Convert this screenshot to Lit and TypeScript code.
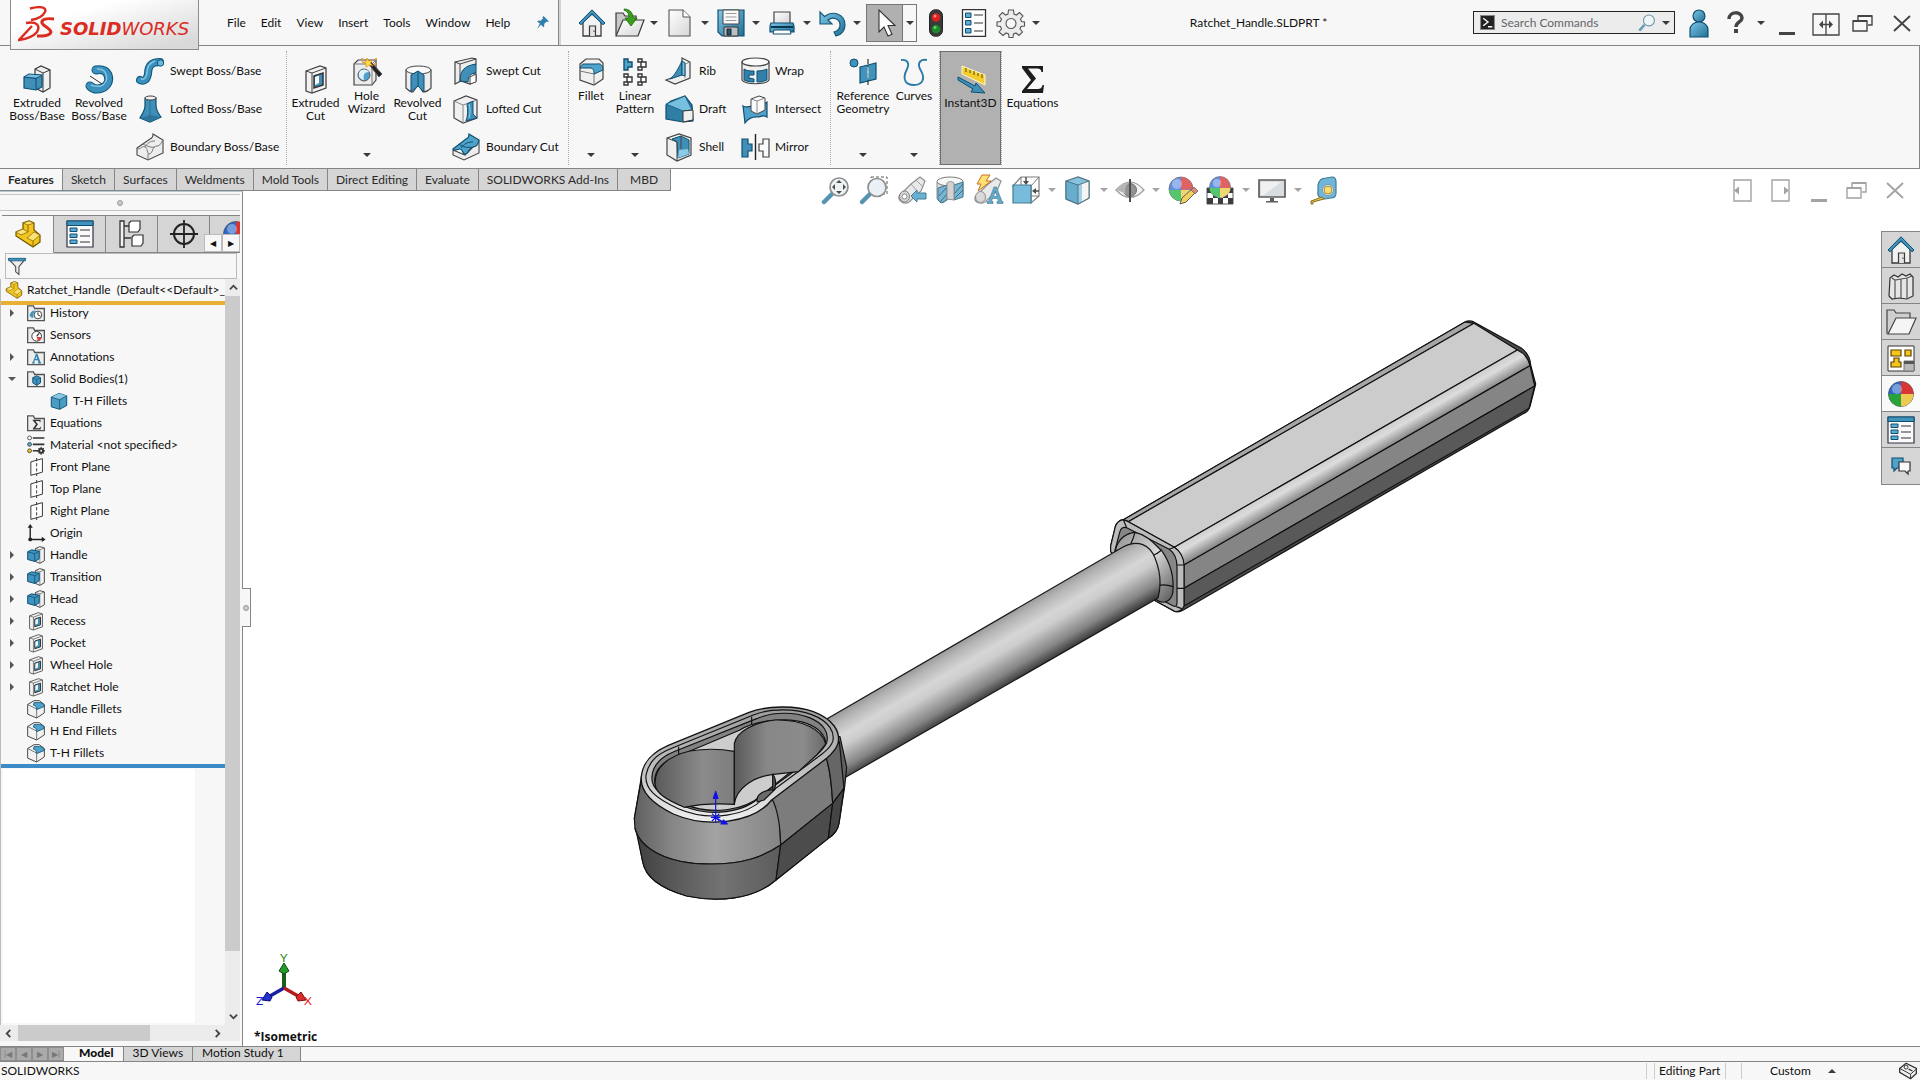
import { LitElement, html, svg, css, nothing, type TemplateResult } from "lit";
import { customElement, state } from "lit/decorators.js";
import { classMap } from "lit/directives/class-map.js";

type Art = ReturnType<typeof svg>;

/* ---------- icon artwork, each on a 28 x 28 grid ---------- */
const art: Record<string, Art> = {
  home: svg`<path d="M5 13v14h18V13L14 5z" fill="#f2f2f2" stroke="#3a3a3a" stroke-width="1.3"/>
    <path d="M11.5 27V17h6v10" fill="#e4e4e4" stroke="#3a3a3a" stroke-width="1.2"/><path d="M16 21.5v1.5" stroke="#3a3a3a"/>
    <path d="M1 14 14 .8 27 14l-2 1.8L14 4.8 3 15.800z" fill="#3f93bd" stroke="#0e4f70"/>`,
  open: svg`<path d="M1 26V4h7l2 3h11v6" fill="#c9c9c9" stroke="#3a3a3a" stroke-width="1.2"/>
    <path d="M2 27 9 11h21l-6 16z" fill="url(#paper)" stroke="#3a3a3a" stroke-width="1.2" transform="translate(-1 0)"/>
    <path d="M9 0c6 0 9 4 9 9h4l-6 8-6-8h4c0-4-1-6-5-8z" fill="#39a01a" stroke="#1c6b0a" stroke-width=".8"/>`,
  file: svg`<path d="M3 1h14l7 7v19H3z" fill="url(#paper)" stroke="#555" stroke-width="1.1"/><path d="M17 1v7h7" fill="#fff" stroke="#555"/>`,
  save: svg`<path d="M1 1h26v26H5l-4-4z" fill="url(#blue)" stroke="#15506e" stroke-width="1.2"/><path d="M6 1h16v14H6z" fill="#fafafa" stroke="#444"/>
    <path d="M8.500 4.500h11M8.500 8h11M8.500 11.500h11" stroke="#999"/><path d="M7 18h14v9H7z" fill="#b9bec2" stroke="#333"/><path d="M10 20h4v6h-4z" fill="#1d5877" stroke="#222"/>`,
  print: svg`<path d="M6 14V3h16v11" fill="url(#paper)" stroke="#444" stroke-width="1.2"/><path d="M3 14h22l1 3v6H2v-6z" fill="url(#blue)" stroke="#0e4f70" stroke-width="1.200"/>
    <path d="M3 18h22" stroke="#083850" stroke-width="2"/><path d="M6 21h16l1 4H5z" fill="#fff" stroke="#0e4f70"/>`,
  undo: svg`<path d="M1 3v12h12l-4-4c5-4 12-1 12 5 0 4-2 6-6 7l2 4c6-1 9-6 9-11C26 5 14 1 5.500 7.500z" fill="url(#blue)" stroke="#155877" stroke-width="1.200"/>`,
  pointer: svg`<path d="M8 1v22l5-5 4 9 4-1.800-4-8.700h7z" fill="#fff" stroke="#333" stroke-width="1.100"/>`,
  traffic: svg`<rect x="7.500" y=".7" width="13" height="26.600" rx="6" fill="#3a3a3a" stroke="#222"/><circle cx="14" cy="8.500" r="4.300" fill="#dc1f1f"/><circle cx="13" cy="7" r="1.500" fill="#ff8a80"/>
    <circle cx="14" cy="20" r="4.300" fill="#1b8a2a"/><circle cx="13" cy="18.500" r="1.500" fill="#62cf6c"/>`,
  options: svg`<path d="M2.500 .7h23v26.600h-23z" fill="#fff" stroke="#333" stroke-width="1.300"/><g fill="#5cacd4" stroke="#0e4f70"><path d="M5.500 4h5.500v4.500H5.500zM5.500 11.500h5.500V16H5.500zM5.500 19.500h5.500V24H5.500z"/></g><path d="M14 6h9M14 14h9M14 22h9" stroke="#333"/>`,
  gear: svg`<path d="M11.500 1h5l.5 4 2.500 1 3-2.500L26 7l-2.500 3 1 2.500 3 .5v4l-3.500.5-1 2.500 2.500 3-3.500 3.500-3-2.500-2.500 1-.5 3.500h-4l-.5-3.500-2.500-1-3 2.500L2 23l2.500-3-1-2.500L0 17v-4l3.500-.5 1-2.500L2 7l3.500-3.500 3 2.500L11 5z" fill="#ececec" stroke="#555" stroke-width="1.100"/><circle cx="14" cy="14.500" r="5" fill="#f7f7f7" stroke="#555" stroke-width="1.100"/>`,
  extrude: svg`<path d="M12 4 18 1l9 4v18l-7 4-8-4z" fill="#f0f0f0" stroke="#3a3a3a" stroke-width="1.200"/><path d="m12 4 8 4v19M20 8l7-3" fill="none" stroke="#3a3a3a"/>
    <path d="M1 12l5-3 13 1v12l-6 3-12-2z" fill="#3f8fb8" stroke="#0e4f70" stroke-width="1.200"/><path d="m1 12 12 1.500V25M13 13.500l6-3.500" fill="none" stroke="#0e4f70"/><path d="m2 11.500 4.500-2L18 10.500l-5 2z" fill="#7cc0e0"/>`,
  revolve: svg`<path d="M11 5C25 2 28 19 17 23c-5 2-9 1-12-2" fill="none" stroke="#0f5679" stroke-width="9" stroke-linecap="round"/><path d="M11 5C25 2 28 19 17 23c-5 2-9 1-12-2" fill="none" stroke="#3b91bb" stroke-width="7" stroke-linecap="round"/>
    <path d="M12 4c11-1 13 13 4 17-4 1-7 0-10-1" fill="none" stroke="#83c4e2" stroke-width="1.500"/><path d="m5 11 12 8" stroke="#333"/>`,
  sweep: svg`<path d="M4 23c5 2 7-1 8-6 0-7 2-12 12-12" fill="none" stroke="#0f5679" stroke-width="8" stroke-linecap="round"/><path d="M4 23c5 2 7-1 8-6 0-7 2-12 12-12" fill="none" stroke="#3b91bb" stroke-width="6" stroke-linecap="round"/>
    <path d="M5 22c4 1 5-2 6-6 0-5 2-10 8-12" fill="none" stroke="#83c4e2" stroke-width="1.500"/><circle cx="24.500" cy="6" r="3.200" fill="#6db7da" stroke="#0f5679"/>`,
  loft: svg`<path d="M9 3v8c0 4-2 7-5 12l10 4 11-5c-4-5-5-8-5-12V3z" fill="#3f8fb8" stroke="#0e4f70" stroke-width="1.200"/><path d="m4 23 10 4 11-5-11-2z" fill="#2c769d"/><path d="M14 5v22" stroke="#2a6f94"/><ellipse cx="14.500" cy="3" rx="5.500" ry="2" fill="#f2f2f2" stroke="#3a3a3a"/>`,
  boundary: svg`<path d="M1 15 14 6c3-1 3-3 3-5l10 6v13L12 27 1 22z" fill="#ededed" stroke="#444" stroke-width="1.100"/><path d="M1 15c4 3 4-3 8-1 3 1 2 7 4 7 4 0 3-8 8-8 3 0 4-3 6-6M12 27v-6M7 11c4 2 8 4 12 3M9 14c3-4 5-6 10-6" fill="none" stroke="#777"/>`,
  boundaryCut: svg`<path d="M1 17 1 22 12 27 27 20V8l-14 14z" fill="#ededed" stroke="#444" stroke-width="1.100"/><path d="M1 16 14 6c3-1 3-3 3-5l10 6c-1 5-3 7-6 7-4 0-4 7-8 7-3 0-2-5-5-5s-5 3-7 0z" fill="#4fa3cb" stroke="#0e4f70" stroke-width="1.200"/><path d="M7 11c4 3 8 4 12 3M9 15c3-4 6-6 12-6" fill="none" stroke="#0e4f70"/>`,
  extrudeCut: svg`<path d="m4 6 14-5 6 2v20l-14 5-6-2z" fill="#f2f2f2" stroke="#444" stroke-width="1.300"/><path d="m4 6 6 2v20M10 8l14-5" fill="none" stroke="#444"/><path d="m12 11 9-3v12l-9 3z" fill="#3f8fb8" stroke="#333" stroke-width="1.500"/><path d="m13 12 4-1.500V18l-4 2z" fill="#f7f7f7"/>`,
  wizard: svg`<path d="m1 6 4-4h18v20l-4 5H1z" fill="#ececec" stroke="#444" stroke-width="1.200"/><path d="M1 6h18v21M19 6l4-4" fill="none" stroke="#777"/><circle cx="11" cy="17" r="6" fill="#4fa3cb" stroke="#555"/><path d="M7 13a6 6 0 0 1 9 1c-5 0-6 3-5 8-6-1-6-6-4-9z" fill="#e2f0f8"/>
    <path d="m14 4 3-1 12 13-3 3z" fill="#222" stroke="#555"/><path d="m14 0 1.500 3L19 2l-1.500 3L20 8l-4-1-3 2v-3.500L9 4h4z" fill="#ffe14d" stroke="#e08600" stroke-width=".7"/><path d="M8 0h2v2H8zM22 0h2v2h-2zM21 5h2v2h-2z" fill="#e8a03a"/>`,
  revolveCut: svg`<path d="M2 5v18c2 2 5 4 7 4l5-7 5 7c3 0 6-2 8-4V5z" fill="#ededed" stroke="#444" stroke-width="1.200"/><ellipse cx="14.500" cy="5" rx="12.500" ry="4" fill="#fafafa" stroke="#444"/><path d="m14 6-7 4v17l7-6 6 6V10z" fill="#3f8fb8" stroke="#0e4f70"/><path d="M14 6v15" stroke="#0e4f70"/>`,
  sweepCut: svg`<path d="M3 5 20 1l4 1v5c-5 1-6 4-7 9l7 1v7l-6 3-9-3-6 3z" fill="#ececec" stroke="#444" stroke-width="1.200"/><path d="M8 24c0-9 3-15 16-17v9c-5 0-8 3-8 9z" fill="#3f8fb8" stroke="#0e4f70"/><path d="M8 24V7l16-5M3 5l5 2" fill="none" stroke="#444"/><path d="M18 20l6-3v8l-6 2z" fill="#fff" stroke="#444"/>`,
  loftCut: svg`<path d="m2 6 12-5 11 4v18l-14 5-9-5z" fill="#f0f0f0" stroke="#444" stroke-width="1.200"/><path d="m2 6 9 4v18M11 10l14-5" fill="none" stroke="#888"/><path d="M15 9c3-2 5-2 6-3v13l4 4-11 3c2-5 2-11 1-17z" fill="#3f8fb8" stroke="#0e4f70"/><path d="M17 9c2 6 1 10 0 14" fill="none" stroke="#9bd0e8"/>`,
  fillet: svg`<path d="M3 6 9 1h13l4 4v16l-9 6-14-5z" fill="#f0f0f0" stroke="#444" stroke-width="1.200"/><path d="M3 13l14 3v11M17 16l9-5" fill="none" stroke="#777"/><path d="M7 6h13c4-1 6 2 6 6l-9 4c0-4-1-6-4-6H3c1-3 2-4 4-4z" fill="#4fa3cb" stroke="#0e4f70"/>`,
  pattern: svg`<g stroke-width="1.400"><path d="M3 1h4v3h4v5H7v3H3z" fill="#4fa3cb" stroke="#0e4f70"/><g fill="#fff" stroke="#333"><path d="M17 1h4v3h4v5h-4v3h-4V9h3V4h-3zM3 16h4v3h4v5H7v3H3v-3h3v-5H3zM17 16h4v3h4v5h-4v3h-4v-3h3v-5h-3z"/></g></g>`,
  rib: svg`<path d="m17 1 8 4v16L10 27l-9-4 16-6z" fill="#efefef" stroke="#444" stroke-width="1.200"/><path d="M25 5l-5 2v14" fill="none" stroke="#888"/><path d="M17 4v14L5 22C10 18 13 12 17 4z" fill="#3f8fb8" stroke="#0e4f70"/><path d="m17 4 3 2v13l-3-1z" fill="#7cc0e0" stroke="#0e4f70"/>`,
  draft: svg`<path d="M1 10 6 6l14-5 7 9 1 16-10 1-17-3z" fill="#2f7ea6" stroke="#0e4f70" stroke-width="1.200"/><path d="M1 9 20 1l7 14-9 1z" fill="#76bfe0" stroke="#0e4f70" stroke-width=".7"/><path d="m18 16 10-1v10l-10 2z" fill="#f0f0f0" stroke="#333"/>`,
  shell: svg`<path d="m2 5 12-4 12 4v17l-14 6L2 22z" fill="#efefef" stroke="#444" stroke-width="1.200"/><path d="m7 6 9-3 8 4v14l-11 4-1-16z" fill="#3f8fb8" stroke="#0e4f70"/><path d="m13 25 1-8 9-1 1 5z" fill="#8bcbe8"/><path d="m2 5 10 4v19M16 3v13" fill="none" stroke="#444"/>`,
  wrap: svg`<path d="M1 5v18c3 5 24 5 27 0V5z" fill="#f0f0f0" stroke="#444" stroke-width="1.200"/><ellipse cx="14.500" cy="5" rx="13.500" ry="4" fill="#fbfbfb" stroke="#444" stroke-width="1.200"/><path d="M3 12c3 2 6 2 10 2v4H8v3l5 1v3c-5 0-8-1-10-2zM16 14c4 0 8-1 10-2v11c-2 1-6 2-10 2z" fill="#2f81ab" stroke="#0e4f70"/>`,
  intersect: svg`<path d="M2 11c5 3 7-2 12 2s8-4 12-6v15c-4-3-6 0-9 0s-8-1-13 6z" fill="#4fa3cb" stroke="#0e4f70" stroke-width="1.200"/><path d="m10 4 8-3 6 2v12l-8 4-6-3z" fill="#fafafa" stroke="#444"/><path d="m10 4 6 2v13M16 6l8-3" fill="none" stroke="#888"/>`,
  mirror: svg`<path d="M1 6h6v5h4v7H7v6H1z" fill="#3f8fb8" stroke="#0e4f70" stroke-width="1.200"/><path d="M28 6h-6v5h-4v7h4v6h6z" fill="#fafafa" stroke="#444" stroke-width="1.200"/><path d="M14.500 1v26" stroke="#222" stroke-width="1.400"/>`,
  geometry: svg`<circle cx="5" cy="5" r="4" fill="#3f93bd" stroke="#0e4f70"/><path d="m11 9 16-4v16l-16 4z" fill="#3f93bd" stroke="#0e4f70" stroke-width="1.200"/><path d="M19 1v27" stroke="#333" stroke-dasharray="5 2" stroke-width="1.200"/><path d="M19 9v11" stroke="#fff"/>`,
  curves: svg`<path d="M1 2c6-1 9 3 6 9-6 12 0 16 7 16s13-5 6-16C17 4 21 1 27 2" fill="none" stroke="#2a7ba6" stroke-width="1.900"/>`,
  instant: svg`<path d="m5 1 23 9v10L5 9z" fill="#f8d43a" stroke="#fff8c8"/><path d="m6 4 21 8v6L6 9z" fill="#f3cc2e"/><path d="M9 3v4M13 5v3M17 6v4M21 8v3M25 9v4" stroke="#5b4700"/><path d="m1 12 17 9 1-3 9 10-14-1 2-3L1 15z" fill="#3f8fb8" stroke="#0e4f70"/>`,
  sigma: svg`<path d="M3 1h21v6h-1.500c-.5-3-2-3.500-4-3.500H9l8 10-9 10.500h11c2 0 4-1 4.500-4H25l-1 8H3v-2l9-11L3 3z" fill="#1d1d1d"/>`,
  zoomFit: svg`<path d="m2 26 8-8" stroke="#4b8fae" stroke-width="4.500" stroke-linecap="round"/><circle cx="17" cy="11" r="9" fill="#eef3f6" stroke="#8a8a8a" stroke-width="1.700"/><path d="m17 4 3 3h-6zM17 18l3-3h-6zM10 11l3-3v6zM24 11l-3-3v6z" fill="#444"/>`,
  zoomArea: svg`<path d="M11 1h16v17H11z" fill="none" stroke="#555" stroke-dasharray="3 2"/><path d="m2 26 8-8" stroke="#4b8fae" stroke-width="4.500" stroke-linecap="round"/><circle cx="17" cy="11.500" r="9" fill="#e9f1f6" stroke="#8a8a8a" stroke-width="1.700"/>`,
  scope: svg`<path d="M1 20 13 8l9-7 5 4-4 10-12 11c-5 3-11-1-10-6z" fill="#e8e8e8" stroke="#8a8a8a" stroke-width="1.200"/><ellipse cx="6.500" cy="20.500" rx="5" ry="5.500" fill="#d4d4d4" stroke="#777"/><circle cx="6.500" cy="20.500" r="2.500" fill="#fff" stroke="#888"/><path d="m13 8 7 8M18 4l6 6" stroke="#999"/><path d="m13 20 6-6v3h9v6h-9v3z" fill="#62acd0" stroke="#3a7896"/>`,
  section: svg`<path d="M1 6v17l6 4 5-4V8h6v14l9-3V6z" fill="#dcdcdc" stroke="#888"/><ellipse cx="14" cy="5.500" rx="13" ry="4.500" fill="#f7f7f7" stroke="#777"/><path d="m2 12 9-3v15l-6 3-3-3zM18 9l9-3v15l-9 3z" fill="#6fb2d2" stroke="#3f6d82"/><path d="m3 20 7-8M4 26l7-8M18 18l9-10M18 23l9-9" stroke="#2f6782"/><path d="M11 7c2-2 5-2 7 0v17l-7-1z" fill="#d0d0d0" stroke="#8b8b8b"/>`,
  annotate: svg`<path d="M1 21 13 9l9-7 5 3-4 10-12 11c-5 3-11 0-10-5z" fill="#e8e8e8" stroke="#8a8a8a" stroke-width="1.200"/><ellipse cx="6.500" cy="21" rx="5" ry="5.500" fill="#d8d8d8" stroke="#888"/><path d="M8-1h8l-4 6h5L4 15l3-7H3z" fill="#ffdf6e" stroke="#c46a18"/><path d="M13 27.500v-2h1.500L20 11h2.500L28 25.500h1v2h-6v-2h1.500l-1-3h-5l-1 3H19v2zm6.500-7H23L21.300 15z" fill="#5da5c9" stroke="#376f8a" stroke-width=".6"/>`,
  orient: svg`<path d="M9 1h18v19l-8 7V10H1l8-9" fill="#fff" stroke="#777" stroke-width="1.200"/><path d="m19 10 8-9M9 1v9M19 20h8" stroke="#777"/><path d="M1 9h18v18H1z" fill="#72b8da" stroke="#3c7692" stroke-width="1.200"/><path d="M14 1v5M27 15h-5" stroke="#444" stroke-width="1.500"/><path d="m14 9-3-4h6zM20 15l4-3v6z" fill="#444"/>`,
  cube: svg`<path d="m2 5 12-4 11 4v17l-11 6-12-5z" fill="#7fc0de" stroke="#4a6c7c" stroke-width="1.300"/><path d="M14 9v19L2 23V5z" fill="#5ea9cc"/><path d="M14 9l11-4v17l-11 6z" fill="#f5f5f5"/><path d="M14 9l4-1.500v18L14 28z" fill="#9ccfe6"/><path d="m2 5 12 4 11-4v17l-11 6-12-5zM14 9v19" fill="none" stroke="#4a6c7c"/>`,
  eye: svg`<path d="M0 14Q14-2 28 14 14 29 0 14z" fill="#f2f2f2" stroke="#999" stroke-width="1.200"/><circle cx="14" cy="14" r="6.500" fill="#8d8d8d" stroke="#666"/><path d="M14 3v23" stroke="#444" stroke-width="2"/><path d="M1 14Q7 7 13 6.500v1C10 9 8 13 10 18z" fill="#b0b0b0"/>`,
  ball: svg`<circle cx="14" cy="14" r="12.500" fill="#2f68c8" stroke="#444" stroke-width=".7"/><path d="M14 14V1.500c4 0 12 3 12.500 12.500z" fill="#d93535"/><path d="M14 14H1.500C2 22 8 26.500 14 26.500z" fill="#28a33a"/><path d="M14 14h12.500c0 7-6 12.500-12.500 12.500z" fill="#eec94f"/><circle cx="10" cy="9" r="5" fill="#fff" opacity=".35"/>`,
  appearance: svg`<circle cx="13" cy="13" r="12" fill="#5a8be0" stroke="#555" stroke-width=".7"/><path d="M13 14V1c5 0 11 3 12 12z" fill="#df5b5b"/><path d="M13 14H1c1 7 6 11 12 11z" fill="#4cc464"/><path d="M13 14h12c0 7-6 11-12 11z" fill="#eed46b"/><circle cx="9" cy="8" r="5" fill="#fff" opacity=".35"/><path d="m12 28 2-6L25 12l4 3-11 11z" fill="#f3cf57" stroke="#555"/><path d="m23 14 3-3 4 4-3 3z" fill="#d98270" stroke="#555" stroke-width=".7"/>`,
  scene: svg`<path d="M1 12h26v16H1z" fill="#fff" stroke="#555"/><path d="M1 12h6v5H1zM21 12h6v5h-6zM7 17h5v5H7zM17 17h5v5h-5zM1 22h6v6H1zM12 22h5v6h-5zM22 22h5v6h-5z" fill="#333"/><circle cx="14" cy="11" r="10.500" fill="#5a8be0" stroke="#555" stroke-width=".6"/><path d="M14 12V.5c4 0 10 3 10.500 11.500z" fill="#df5b5b"/><path d="M14 12H3.500C4 18 9 21.500 14 21.500z" fill="#4cc464"/><path d="M14 12h10.500c0 5-5 9.500-10.500 9.500z" fill="#eed46b"/><circle cx="11" cy="7" r="4" fill="#fff" opacity=".35"/>`,
  monitor: svg`<path d="M1 4h26v17H1z" fill="#d9dcde" stroke="#555" stroke-width="1.700"/><path d="M12 22h4v3h4v1.500H8V25h4z" fill="#555"/><path d="m3 6 20 0-17 13H3z" fill="#f0f0f0"/>`,
  tape: svg`<path d="M8 9c1-5 4-7 8-7l6-1c3 0 4 2 4 5v11c0 3-2 5-5 5l-6 1c-5 0-8-3-7-8z" fill="#69b3d6" stroke="#377590" stroke-width="1.200"/><circle cx="18" cy="14" r="5.500" fill="#fff" stroke="#6b8c9b"/><circle cx="18" cy="14" r="4" fill="#f7dc6e" stroke="#9c8330"/><path d="M12 21 1 25v3h2v-2l11-3z" fill="#ecc440" stroke="#7e6415"/>`,
  books: svg`<path d="m3 6 4-3 4 2 4-3 4 2 4-2 3 3v19l-6 3-8-1-7 1-3-3z" fill="#e6e6e6" stroke="#333" stroke-width="1.200"/><path d="M8 8v18M14 7v20M20 6v20M5 6l3 2 6-1 6-1 5-2" fill="none" stroke="#555" stroke-width="1.200"/>`,
  folder: svg`<path d="M0 26V2h7l2 3h14v5" fill="#cfcfcf" stroke="#444" stroke-width="1.200"/><path d="M1 26 9 10h20l-7 16z" fill="#f5f5f5" stroke="#444" stroke-width="1.200"/>`,
  palette: svg`<path d="M1 2h26v25H1z" fill="#fff" stroke="#333"/><path d="M4 6h10v6H4zM18 6h6v6h-6zM4 18h3v-4h5v4h2v5H4z" fill="#f4c51d" stroke="#5a4300" stroke-width="1.200"/><path d="M17 17h10v10H17z" fill="#b9b9b9" stroke="#777"/><path d="M17 17h10v3H17z" fill="#555"/>`,
  props: svg`<path d="M1 1h26v26H1z" fill="#fafafa" stroke="#334" stroke-width="1.200"/><path d="M1 1h26v4.500H1z" fill="#3f93bd" stroke="#0e4f70"/><g fill="#5cacd4" stroke="#0e4f70"><path d="M4 8h7v3.500H4zM4 14h7v3.500H4zM4 20h7v3.500H4z"/></g><path d="M14 10h10M14 16h10M14 22h10" stroke="#333"/>`,
  chat: svg`<path d="M5 6h11v10h-6l-3 3v-3H5z" fill="#4fa3cb" stroke="#0e4f70" stroke-width="1.200"/><path d="M12 10h11v9h-2v3l-3-3h-6z" fill="#fafafa" stroke="#333" stroke-width="1.200"/>`,
  part: svg`<path d="m2 12 7-3V3l6-2 5 2v7l6 5v7l-7 5L2 16z" fill="#f3c51f" stroke="#6d5300" stroke-width="1.200"/><path d="m9 3 5 2 6-2-5-2zM2 12l5 3 7-3-5-3zM13 18l6 3 7-6-6-3z" fill="#fbe27a" stroke="#8f6d00" stroke-width=".8"/><path d="M14 5v7M19 21v6" stroke="#8f6d00"/>`,
  config: svg`<path d="M2 1h4v26H2zM6 6h5M6 18h7" fill="#f3f3f3" stroke="#333" stroke-width="1.300"/><path d="m11 3 2-2h9v8l-2 3h-9zM14 17l2-2h9v8l-2 3h-9z" fill="#fff" stroke="#333" stroke-width="1.200"/>`,
  target: svg`<circle cx="14" cy="14" r="10" fill="none" stroke="#222" stroke-width="2"/><path d="M14 0v28M0 14h28" stroke="#222" stroke-width="1.800"/>`,
  history: svg`<path d="M1 26V3h9l2 4h15v19z" fill="#ededed" stroke="#555" stroke-width="2"/><circle cx="17" cy="17" r="6" fill="#fff" stroke="#444" stroke-width="1.500"/><path d="m17 13 0 4 4 2" fill="none" stroke="#333" stroke-width="1.500"/><path d="M4 18c1-6 5-8 9-8l-3 5v6c-2 1-4 0-6-3z" fill="#3f93bd"/>`,
  sensors: svg`<path d="M1 26V3h9l2 4h15v19z" fill="#ededed" stroke="#555" stroke-width="2"/><circle cx="15" cy="16" r="7.500" fill="#fff" stroke="#333" stroke-width="1.500"/><path d="m15 16 4-5" stroke="#333" stroke-width="2"/><path d="M15 17h7c0 4-3 6-5 6z" fill="#e23b3b"/>`,
  annotations: svg`<path d="M1 26V3h9l2 4h15v19z" fill="#ededed" stroke="#555" stroke-width="2"/><path d="M8 24v-2h1l5-13h2l5 13h1v2h-5v-2h1l-1-3h-5l-1 3h1v2zm5-7h3l-1.500-4z" fill="#2f81ab"/>`,
  bodies: svg`<path d="M1 26V3h9l2 4h15v19z" fill="#ededed" stroke="#555" stroke-width="2"/><path d="m9 12 6-3 6 3v8l-6 4-6-4z" fill="#3f93bd" stroke="#0e4f70" stroke-width="1.500"/><path d="m9 12 6 3 6-3M15 15v9" fill="none" stroke="#0e4f70"/>`,
  equations: svg`<path d="M1 26V3h9l2 4h15v19z" fill="#ededed" stroke="#555" stroke-width="2"/><path d="M9 9h12v4h-1c0-2-1-2-3-2h-4l4 5-4 6h5c2 0 3-1 3-2h1l-1 4H9v-1l5-7-5-6z" fill="#333"/>`,
  material: svg`<circle cx="4" cy="3" r="3" fill="#fff" stroke="#333" stroke-width="1.200"/><circle cx="4" cy="13" r="3" fill="#5cacd4" stroke="#333" stroke-width="1.200"/><circle cx="4" cy="23" r="3" fill="#f3c51f" stroke="#333" stroke-width="1.200"/><path d="M9 3h18M9 13h18M9 23h9" stroke="#333" stroke-width="2.500"/><circle cx="22" cy="23" r="4.500" fill="#333"/><path d="M22 17v12M16 23h12M18 19l8 8M26 19l-8 8" stroke="#333" stroke-width="2"/><circle cx="22" cy="23" r="1.500" fill="#fff"/>`,
  plane: svg`<path d="m6 6 18-5v21L6 27z" fill="#fff" stroke="#333" stroke-width="1.500"/><path d="M15 0v28" stroke="#333" stroke-dasharray="5 3" stroke-width="1.500"/>`,
  origin: svg`<path d="M5 4v20h20" fill="none" stroke="#222" stroke-width="2.200"/><path d="m5 0 4 6H1zM29 24l-6-4v8z" fill="#222"/><circle cx="5" cy="24" r="3" fill="#222"/>`,
  boss: svg`<path d="m13 4 7-3 7 2v20l-7 4-7-3z" fill="#f2f2f2" stroke="#444" stroke-width="1.500"/><path d="m13 4 7 2v21M20 6l7-3" fill="none" stroke="#555"/><path d="m1 9 6-3 12 2v12l-7 4-11-3z" fill="#3f93bd" stroke="#0e4f70" stroke-width="1.500"/><path d="m1 9 11 3 7-4M12 12v12" fill="none" stroke="#0e4f70" stroke-width="1.200"/>`,
  solid: svg`<path d="m2 8 12-6 12 4v15l-11 6-13-4z" fill="#4a9cc3" stroke="#0e4f70" stroke-width="1.500"/><path d="m2 8 13 4 11-6-12-4z" fill="#86c8e4"/><path d="m2 8 13 4 11-6M15 12v15" fill="none" stroke="#0e4f70" stroke-width="1.200"/>`,
  filletSmall: svg`<path d="m1 7 10-6h8l8 6v13l-12 8-14-6z" fill="#f2f2f2" stroke="#444" stroke-width="1.500"/><path d="m1 7 14 7v14" fill="none" stroke="#555" stroke-width="1.200"/><path d="M11 4h8c5 0 8 3 8 6l-12 5c0-4-1-6-5-7z" fill="#4fa3cb" stroke="#0e4f70" stroke-width="1.200"/>`,
  funnel: svg`<path d="M1 3h26L17 15v12l-5-4v-8z" fill="#eee" stroke="#444" stroke-width="1.600"/><path d="M1 2h26v4H1z" fill="#3f93bd" stroke="#0e4f70"/>`,
  user: svg`<circle cx="14" cy="7" r="6" fill="url(#blue)" stroke="#0e4f70" stroke-width="1.200"/><path d="M5 28V21c0-5 4-8 9-8s9 3 9 8v7z" fill="url(#blue)" stroke="#0e4f70" stroke-width="1.200"/>`,
  question: svg`<path d="M8 10c0-8 13-8 13-1 0 4-6 4-6 9" fill="none" stroke="#444" stroke-width="3.500"/><path d="M13 20h4v4h-4z" fill="#444"/>`,
  minimize: svg`<path d="M6 24.500h16" stroke="currentColor" stroke-width="3"/>`,
  spread: svg`<path d="M1 5h26v21H1z" fill="none" stroke="currentColor" stroke-width="1.300"/><path d="M14 5v21M9 15.500h10" stroke="currentColor" stroke-width="1.300"/><path d="m7 15.500 4-4v8zM21 15.500l-4-4v8z" fill="currentColor"/>`,
  restore: svg`<path d="M9 11V7h14v9h-4" fill="none" stroke="currentColor" stroke-width="1.400"/><path d="M4 12h14v10H4z" fill="none" stroke="currentColor" stroke-width="1.400"/><path d="M9 7h14M4 12h14" stroke="currentColor" stroke-width="2"/>`,
  close: svg`<path d="m6 7 16 15M22 7 6 22" stroke="currentColor" stroke-width="1.900"/>`,
  dockLeft: svg`<path d="M5 4h17v21H5z" fill="none" stroke="currentColor" stroke-width="1.400"/><path d="M5 14.500l5-4v8z" fill="currentColor"/>`,
  dockRight: svg`<path d="M5 4h17v21H5z" fill="none" stroke="currentColor" stroke-width="1.400"/><path d="M22 14.500l-5-4v8z" fill="currentColor"/>`,
  prompt: svg`<path d="M1 1h26v26H1z" fill="#222" stroke="#888" stroke-width="2"/><path d="m6 6 9 7-9 7M15 22h8" fill="none" stroke="#fff" stroke-width="2.500"/>`,
  lens: svg`<path d="m2 26 8-9" stroke="#6d9db5" stroke-width="4"/><circle cx="17" cy="10" r="8.500" fill="#eef6fa" stroke="#7397a8" stroke-width="1.800"/>`,
  pin: svg`<path d="m16 2 10 10-3 1-1-1-5 5c1 3 0 5-1 6l-5-5-7 8 5-10-5-4c2-2 4-2 6-1l5-5-1-2z" fill="#2f7fa8"/>`,
  tag: svg`<path d="m1 10 10-8 16 8v8l-9 8L1 16z" fill="#f0f0f0" stroke="#333" stroke-width="2"/><path d="m1 10 17 9 9-8M18 19v7" fill="none" stroke="#333" stroke-width="1.500"/><circle cx="11" cy="8" r="3" fill="none" stroke="#333" stroke-width="1.500"/><path d="m15 11 6 3" stroke="#333" stroke-width="2"/>`,
};

const glyph = (name: string, size = ""): TemplateResult =>
  html`<svg class="glyph ${size}" viewBox="0 0 28 28" aria-hidden="true">${art[name]}</svg>`;
const caret = (extra = "") => html`<span class="caret ${extra}"></span>`;

interface Cmd { icon: string; label: string; lines?: string[]; drop?: boolean; on?: boolean }
interface Group { name: string; big: Cmd[]; columns: Cmd[][] }

const GROUPS: Group[] = [
  { name: "boss",
    big: [{ icon: "extrude", label: "Extruded Boss/Base", lines: ["Extruded", "Boss/Base"] }, { icon: "revolve", label: "Revolved Boss/Base", lines: ["Revolved", "Boss/Base"] }],
    columns: [[{ icon: "sweep", label: "Swept Boss/Base" }, { icon: "loft", label: "Lofted Boss/Base" }, { icon: "boundary", label: "Boundary Boss/Base" }]] },
  { name: "cut",
    big: [{ icon: "extrudeCut", label: "Extruded Cut", lines: ["Extruded", "Cut"] }, { icon: "wizard", label: "Hole Wizard", lines: ["Hole", "Wizard"], drop: true }, { icon: "revolveCut", label: "Revolved Cut", lines: ["Revolved", "Cut"] }],
    columns: [[{ icon: "sweepCut", label: "Swept Cut" }, { icon: "loftCut", label: "Lofted Cut" }, { icon: "boundaryCut", label: "Boundary Cut" }]] },
  { name: "modify",
    big: [{ icon: "fillet", label: "Fillet", lines: ["Fillet"], drop: true }, { icon: "pattern", label: "Linear Pattern", lines: ["Linear", "Pattern"], drop: true }],
    columns: [[{ icon: "rib", label: "Rib" }, { icon: "draft", label: "Draft" }, { icon: "shell", label: "Shell" }], [{ icon: "wrap", label: "Wrap" }, { icon: "intersect", label: "Intersect" }, { icon: "mirror", label: "Mirror" }]] },
  { name: "reference",
    big: [{ icon: "geometry", label: "Reference Geometry", lines: ["Reference", "Geometry"], drop: true }, { icon: "curves", label: "Curves", lines: ["Curves"], drop: true }],
    columns: [] },
  { name: "instant", big: [{ icon: "instant", label: "Instant3D", lines: ["Instant3D"], on: true }], columns: [] },
  { name: "equations", big: [{ icon: "sigma", label: "Equations", lines: ["Equations"] }], columns: [] },
];

const MENUS = ["File", "Edit", "View", "Insert", "Tools", "Window", "Help"];
const TABS = ["Features", "Sketch", "Surfaces", "Weldments", "Mold Tools", "Direct Editing", "Evaluate", "SOLIDWORKS Add-Ins", "MBD"];

const QUICK: Cmd[] = [
  { icon: "open", label: "Open", drop: true }, { icon: "file", label: "New", drop: true }, { icon: "save", label: "Save", drop: true },
  { icon: "print", label: "Print", drop: true }, { icon: "undo", label: "Undo", drop: true },
];

const VIEW: Cmd[] = [
  { icon: "zoomFit", label: "Zoom to Fit" }, { icon: "zoomArea", label: "Zoom to Area" }, { icon: "scope", label: "Previous View" }, { icon: "section", label: "Section View" },
  { icon: "annotate", label: "Dynamic Annotation Views" }, { icon: "orient", label: "View Orientation", drop: true }, { icon: "cube", label: "Display Style", drop: true },
  { icon: "eye", label: "Hide/Show Items", drop: true }, { icon: "appearance", label: "Edit Appearance" }, { icon: "scene", label: "Apply Scene", drop: true },
  { icon: "monitor", label: "View Settings", drop: true }, { icon: "tape", label: "Measure" },
];

interface Node { label: string; icon: string; open?: boolean; branch?: boolean; child?: boolean }
const TREE: Node[] = [
  { label: "History", icon: "history", branch: true }, { label: "Sensors", icon: "sensors" }, { label: "Annotations", icon: "annotations", branch: true },
  { label: "Solid Bodies(1)", icon: "bodies", branch: true, open: true }, { label: "T-H Fillets", icon: "solid", child: true }, { label: "Equations", icon: "equations" },
  { label: "Material <not specified>", icon: "material" }, { label: "Front Plane", icon: "plane" }, { label: "Top Plane", icon: "plane" }, { label: "Right Plane", icon: "plane" },
  { label: "Origin", icon: "origin" }, { label: "Handle", icon: "boss", branch: true }, { label: "Transition", icon: "boss", branch: true }, { label: "Head", icon: "boss", branch: true },
  { label: "Recess", icon: "extrudeCut", branch: true }, { label: "Pocket", icon: "extrudeCut", branch: true }, { label: "Wheel Hole", icon: "extrudeCut", branch: true },
  { label: "Ratchet Hole", icon: "extrudeCut", branch: true }, { label: "Handle Fillets", icon: "filletSmall" }, { label: "H End Fillets", icon: "filletSmall" }, { label: "T-H Fillets", icon: "filletSmall" },
];

const PANE: [string, string][] = [["home", "Resources"], ["books", "Design Library"], ["folder", "File Explorer"], ["palette", "View Palette"], ["ball", "Appearances"], ["props", "Custom Properties"], ["chat", "Forum"]];

@customElement("app-root")
export class AppRoot extends LitElement {
  @state() private tab = "Features";
  @state() private study = "Model";

  static styles = css`
    :host { display: flex; flex-direction: column; height: 100vh; overflow: hidden; background: #fff; color: #101010;
      font: 12px/16px Lato, "Open Sans", sans-serif; }
    * { box-sizing: border-box; }
    button, input { font: inherit; color: inherit; margin: 0; padding: 0; border: 0; background: none; outline: 0; }
    ul { list-style: none; margin: 0; padding: 0; }
    .glyph { width: 28px; height: 28px; flex: none; display: block; overflow: visible; }
    .glyph.small { width: 18px; height: 18px; }
    .glyph.tiny { width: 15px; height: 15px; }
    .caret { flex: none; width: 0; height: 0; border: 4px solid transparent; border-top-color: #3a3a3a; border-bottom-width: 0; }
    .caret.up { border-top-width: 0; border-bottom: 4px solid #3a3a3a; }
    .defs { position: absolute; width: 0; height: 0; }

    .title { flex: none; display: flex; align-items: center; height: 46px; padding-left: 10px; padding-right: 4px; background: #f7f7f7; border-bottom: 1px solid #858585; }
    .logo { flex: none; align-self: flex-start; position: relative; z-index: 2; width: 189px; height: 50px; border: 1px solid #8c8c8c; border-top: 0;
      background: linear-gradient(165deg, #fff 30%, #d9d9d9 90%); color: #dc2b1f; display: flex; align-items: center; padding: 8px 0 0 7px; gap: 6px;
      font: italic 18px/24px "DejaVu Sans", sans-serif; }
    .logo svg { width: 36px; height: 36px; flex: none; margin-top: -9px; }
    .menus { display: flex; gap: 15px; margin: 0 25px 0 28px; }
    .rule { width: 3px; height: 45px; margin: 0 17px 0 8px; background: #d4d4d4; border-left: 1px solid #858585; }
    .quick { display: flex; align-items: center; }
    .quick .home { margin-right: 9px; }
    .split { display: flex; align-items: center; }
    .quick .split { width: 51px; }
    .quick .split .arrow { width: 22px; display: flex; justify-content: center; }
    .quick .split:nth-last-child(6) { width: 47px; }
    .pick { display: flex; height: 38px; border: 1px solid #777; margin-right: 5px; }
    .pick .body { width: 36px; background: #b0b0b0; display: grid; place-items: center; border-right: 1px solid #777; }
    .pick .arrow { width: 13px; display: grid; place-items: center; }
    .quick .options { margin: 0 9px 0 10px; }
    .quick .last { width: 19px; display: flex; justify-content: center; padding-left: 3px; }
    .doc { flex: 1; text-align: center; }
    .search { display: flex; align-items: center; width: 202px; height: 23px; border: 1px solid #222; background: #ececec; padding: 0 4px 0 6px; gap: 6px; }
    .search input { flex: 1; min-width: 0; }
    .search input::placeholder { color: #63666b; opacity: 1; }
    .window { display: flex; align-items: center; color: #444; margin-left: 10px; }
    .window .ask { margin-left: 8px; }
    .window .caret { margin: 0 8px; }
    .window .wide { margin: 0 9px 0 11px; }
    .window .far { margin-left: 11px; }

    .ribbon { flex: none; display: flex; height: 123px; background: #f7f7f7; border-bottom: 1px solid #858585; border-right: 1px solid #858585; padding: 5px 0 3px; }
    .group { display: flex; border-right: 1px dotted #aaa; }
    .group.equations { border: 0; }
    .group.boss { width: 287px; padding-left: 6px; } .group.boss .big { width: 62px; } .group.boss .column { padding-left: 6px; }
    .group.cut { width: 282px; padding-left: 3px; } .group.cut .big { width: 51px; } .group.cut .column { padding-left: 9px; }
    .group.modify { width: 262px; } .group.modify .big { width: 44px; } .group.modify .column { width: 76px; padding-left: 8px; } .group.modify .column + .column { width: 96px; }
    .group.reference { width: 109px; padding-left: 4px; } .group.reference .big { width: 56px; } .group.reference .big + .big { width: 46px; }
    .group.instant .big, .group.equations .big { width: 61px; }
    .big { display: flex; flex-direction: column; align-items: center; padding-top: 14px; text-align: center; line-height: 13px; flex: none; }
    .big .text { margin-top: 3px; display: flex; flex-direction: column; white-space: nowrap; }
    .big.drop { padding-top: 7px; }
    .big .caret { margin-top: auto; margin-bottom: 8px; }
    .big.on { background: #b1b1b1; border: 1px solid #6e6e6e; padding-top: 13px; }
    .column { display: flex; flex-direction: column; gap: 10px; padding-top: 6px; }
    .row { display: flex; align-items: center; gap: 6px; white-space: nowrap; }

    .tabs { flex: none; display: flex; height: 22px; position: relative; z-index: 1; align-self: flex-start; }
    .tabs button { padding: 0 8px; background: #d5d5d5; border-right: 1px solid #858585; border-bottom: 1px solid #858585; color: #2a2a2a; }
    .tabs button.on { background: #f7f7f7; font-weight: 700; }
    .tabs button:last-child { padding: 0 12px; }

    .work { flex: 1; min-height: 0; display: flex; }
    .side { flex: none; width: 243px; background: #f7f7f7; border-right: 1px solid #858585; border-top: 1px solid #b3c9cc; display: flex; flex-direction: column; position: relative; padding-right: 2px; }
    .grip { flex: none; height: 17px; margin: 2px 0 4px; border: solid #c4c4c4; border-width: 1px 0; display: grid; place-items: center; }
    .dot { width: 6px; height: 6px; border-radius: 50%; background: #ccc; border: 1px solid #999; display: block; }
    .modes { display: flex; height: 38px; padding-left: 2px; overflow: hidden; position: relative; flex: none; }
    .modes button { flex: none; width: 52px; background: #d5d5d5; border: solid #858585; border-width: 1px 1px 1px 0; display: grid; place-items: center; }
    .modes button.on { background: #f7f7f7; border-bottom-color: #f7f7f7; }
    .scrollers { position: absolute; right: 0; bottom: 1px; display: flex; }
    .modes .scrollers button { width: 18px; height: 18px; background: #f7f7f7; border: 1px solid #bbb; font-size: 8px; line-height: 16px; }
    .filter { display: flex; align-items: center; flex: none; height: 26px; margin: 0 3px 0 5px; border: 1px solid #bbb; padding-left: 2px; gap: 4px; }
    .filter input { flex: 1; min-width: 0; }
    .explore { flex: 1; min-height: 0; display: flex; }
    .tree { flex: 1; min-width: 0; display: flex; flex-direction: column; border-left: 1px solid #bbb; overflow: hidden; }
    .root { flex: none; height: 26px; border-bottom: 4px solid #e8b033; display: flex; align-items: center; gap: 4px; padding-left: 4px; white-space: pre; overflow: hidden; }
    .nodes { flex: none; margin-top: -3px; }
    .node { display: flex; align-items: center; height: 22px; white-space: nowrap; }
    .node .toggle { width: 26px; display: flex; height: 22px; align-items: center; padding-left: 9px; }
    .node .toggle::before { content: ""; border: 4px solid transparent; border-left: 4px solid #555; border-right: 0; }
    .node .toggle.open { padding-left: 7px; }
    .node .toggle.open::before { border: 4px solid transparent; border-top: 4px solid #555; border-bottom: 0; }
    .node .pad { width: 26px; } .node.child .pad { width: 49px; }
    .node .glyph { margin-right: 5px; }
    .rollback { flex: none; height: 4px; background: #3b8bc6; }
    .blank { flex: 1; background: #fff; margin: 1px 30px 2px 2px; }
    .vbar { flex: none; width: 15px; background: #ececec; display: flex; flex-direction: column; }
    .hbar { flex: none; height: 16px; margin-bottom: 5px; background: #ececec; display: flex; padding-right: 15px; }
    .step { flex: none; width: 16px; height: 17px; display: grid; place-items: center; }
    .step svg { width: 9px; height: 9px; fill: none; stroke: #444; stroke-width: 2; }
    .vbar .track { flex: 1; } .vbar .thumb { height: 92%; background: #cbcbcb; }
    .hbar .track { flex: 1; padding-left: 2px; } .hbar .thumb { width: 69%; height: 100%; background: #cbcbcb; }
    .handle { position: absolute; left: 242px; top: 396px; z-index: 2; width: 9px; height: 39px; background: #f7f7f7; border: 1px solid #858585; border-left: 0; display: grid; place-items: center; }

    .view { flex: 1; min-width: 0; position: relative; background: #fff; }
    .model { position: absolute; inset: 0; width: 100%; height: 100%; }
    .hud { position: absolute; top: -15px; left: 579px; display: flex; opacity: .95; z-index: 2; }
    .hud .split { width: 38px; } .hud .split.drop { width: 52px; }
    .hud .arrow { width: 24px; display: flex; justify-content: center; } .hud .caret { border-top-color: #a0a0a0; }
    .mdi { position: absolute; top: -15px; right: 11px; display: flex; gap: 10px; color: #a3a3a3; }
    .pane { position: absolute; right: 0; top: 40px; display: flex; flex-direction: column; border: 1px solid #858585; border-right: 0; }
    .pane button { width: 38px; height: 36px; background: #d5d5d5; display: grid; place-items: center; border-bottom: 1px solid #858585; }
    .pane button:last-child { border-bottom: 0; }
    .pane button.on { background: #f9f9f9; }
    .triad { position: absolute; left: 11px; bottom: 31px; width: 60px; height: 60px; font-size: 12px; overflow: visible; }
    .orientation { position: absolute; left: 11px; bottom: 1px; font-family: "Open Sans", sans-serif; font-weight: 700; }

    .sheets { flex: none; display: flex; height: 16px; background: #f7f7f7; border: solid #858585; border-width: 1px 0; }
    .sheets button { line-height: 12px; height: 14px; padding: 0 9px 2px; background: #d5d5d5; border-right: 1px solid #858585; display: block; }
    .sheets button:last-child { padding-right: 16px; }
    .sheets .page { width: 16px; padding: 0; background: #aaa; border: 1px solid #8e8e8e; color: #777; font-size: 8px; }
    .sheets .on { background: #f7f7f7; font-weight: 900; padding: 0 9px 2px 12px; margin-left: 3px; }
    .status { flex: none; display: flex; align-items: center; height: 18px; background: #f7f7f7; padding-right: 3px; }
    .status .first { flex: 1; padding-left: 1px; }
    .status .cell { border-left: 1px solid #ccc; height: 16px; padding: 0 4px; }
    .status .gap { width: 8px; padding: 0; } .status .narrow { width: 16px; padding: 0; }
    .status .mode { width: 71px; } .status .units { width: 158px; padding-left: 28px; display: flex; align-items: center; gap: 17px; }
  `;

  render() {
    return html`${this.defs()}${this.titleBar()}${this.ribbon()}
      <nav class="tabs">${TABS.map(t => html`<button class=${classMap({ on: t === this.tab })} @click=${() => (this.tab = t)}>${t}</button>`)}</nav>
      <main class="work">${this.side()}${this.view()}</main>
      ${this.footer()}`;
  }

  private defs() {
    return html`<svg class="defs" aria-hidden="true"><defs>
      <linearGradient id="blue" x1="0" y1="0" x2="1" y2="1"><stop offset="0" stop-color="#7fc6e6"/><stop offset="1" stop-color="#216f97"/></linearGradient>
      <linearGradient id="paper" x1="0" y1="0" x2="1" y2="1"><stop offset="0" stop-color="#fff"/><stop offset="1" stop-color="#d6d6d6"/></linearGradient>
    </defs></svg>`;
  }

  private split(c: Cmd) {
    return html`<div class="split ${c.drop ? "drop" : ""}"><button aria-label=${c.label}>${glyph(c.icon)}</button>
      ${c.drop ? html`<button class="arrow" aria-label="${c.label} options">${caret()}</button>` : nothing}</div>`;
  }

  private titleBar() {
    return html`<header class="title">
      <div class="logo"><svg viewBox="0 0 36 36" fill="none" stroke="#dc2b1f" aria-hidden="true">
          <path d="M12 2.500C22 0 29 1 27 6 25 10 19 13 13 14" stroke-width="2.400"/>
          <path d="M8 17C18 15 23 19 19 26 15 31 8 33 1 34L14 20" stroke-width="2.400"/>
          <path d="M36 13C29 12 23 13 24 17 25 20 32 22 33 26 32 30 25 30 19 30" stroke-width="3"/></svg>
        <span><b>SOLID</b>WORKS</span></div>
      <nav class="menus">${MENUS.map(m => html`<button>${m}</button>`)}</nav>
      <button aria-label="Pin menu">${glyph("pin", "tiny")}</button>
      <span class="rule"></span>
      <div class="quick"><button class="home" aria-label="Home">${glyph("home")}</button>
        ${QUICK.map(c => this.split(c))}
        <div class="pick"><button class="body" aria-label="Select">${glyph("pointer")}</button><button class="arrow" aria-label="Select options">${caret()}</button></div>
        <button aria-label="Rebuild">${glyph("traffic")}</button><button class="options" aria-label="File Properties">${glyph("options")}</button>
        <button aria-label="Options">${glyph("gear")}</button><button class="last" aria-label="More options">${caret()}</button>
      </div>
      <div class="doc">Ratchet_Handle.SLDPRT *</div>
      <label class="search">${glyph("prompt", "tiny")}<input aria-label="Search Commands" placeholder="Search Commands">${glyph("lens", "small")}${caret()}</label>
      <div class="window"><button aria-label="Account">${glyph("user")}</button><button class="ask" aria-label="Help">${glyph("question")}</button>${caret()}
        <button aria-label="Minimize">${glyph("minimize")}</button><button class="wide" aria-label="Span displays">${glyph("spread")}</button>
        <button aria-label="Restore">${glyph("restore")}</button><button class="far" aria-label="Close">${glyph("close")}</button></div>
    </header>`;
  }

  private ribbon() {
    return html`<section class="ribbon">${GROUPS.map(g => html`<div class="group ${g.name}">
      ${g.big.map(c => html`<button class=${classMap({ big: true, drop: !!c.drop, on: !!c.on })}>${glyph(c.icon)}
        <span class="text">${c.lines!.map(l => html`<span>${l}</span>`)}</span>${c.drop ? caret() : nothing}</button>`)}
      ${g.columns.map(col => html`<div class="column">${col.map(c => html`<button class="row">${glyph(c.icon)}<span>${c.label}</span></button>`)}</div>`)}
    </div>`)}</section>`;
  }

  private side() {
    const chevron = (d: string, label: string) => html`<button class="step" aria-label=${label}><svg viewBox="0 0 10 10"><path d=${d}/></svg></button>`;
    return html`<aside class="side">
      <div class="grip"><i class="dot"></i></div>
      <div class="modes">
        ${[["part", "FeatureManager"], ["props", "PropertyManager"], ["config", "ConfigurationManager"], ["target", "DimXpertManager"], ["ball", "DisplayManager"]].map(
          ([i, l], n) => html`<button class=${classMap({ on: n === 0 })} aria-label=${l}>${glyph(i)}</button>`)}
        <div class="scrollers"><button aria-label="Previous tab">◀</button><button aria-label="Next tab">▶</button></div>
      </div>
      <label class="filter">${glyph("funnel", "small")}<input aria-label="Filter"></label>
      <div class="explore">
        <div class="tree">
          <div class="root">${glyph("part", "small")}<span>Ratchet_Handle  (Default&lt;&lt;Default&gt;_</span></div>
          <ul class="nodes">${TREE.map(n => html`<li class=${classMap({ node: true, child: !!n.child })}>
            ${n.branch ? html`<button class=${classMap({ toggle: true, open: !!n.open })} aria-label="Toggle ${n.label}"></button>` : html`<span class="pad"></span>`}
            ${glyph(n.icon, "small")}<span>${n.label}</span></li>`)}</ul>
          <div class="rollback"></div><div class="blank"></div>
        </div>
        <div class="vbar">${chevron("M1 7 5 3 9 7", "Scroll up")}<div class="track"><div class="thumb"></div></div>${chevron("M1 3 5 7 9 3", "Scroll down")}</div>
      </div>
      <div class="hbar">${chevron("M7 1 3 5 7 9", "Scroll left")}<div class="track"><div class="thumb"></div></div>${chevron("M3 1 7 5 3 9", "Scroll right")}</div>
      <button class="handle" aria-label="Collapse panel"><i class="dot"></i></button>
    </aside>`;
  }

  private view() {
    return html`<section class="view">
      ${this.model()}
      <div class="hud">${VIEW.map(c => this.split(c))}</div>
      <div class="mdi">${["dockLeft", "dockRight", "minimize", "restore", "close"].map(i => html`<button aria-label=${i}>${glyph(i)}</button>`)}</div>
      <div class="pane">${PANE.map(([i, l]) => html`<button class=${classMap({ on: i === "ball" })} aria-label=${l}>${glyph(i)}</button>`)}</div>
      <svg class="triad" viewBox="0 0 60 60">
        <path d="M30 33V15" stroke="#17601a" stroke-width="4"/><path d="m30 8 5 8-5 3-5-3z" fill="#239a2a" stroke="#0c4a10"/>
        <path d="m30 33-14 8" stroke="#1820a0" stroke-width="3.500"/><path d="m8 45 5-8 5 5-2 4z" fill="#2430d0" stroke="#0b1070"/>
        <path d="m30 33 14 8" stroke="#b11c1c" stroke-width="3.500"/><path d="m52 45-5-8-5 5 2 4z" fill="#dc2a2a" stroke="#7a0f0f"/>
        <text x="26" y="7" fill="#1f8a22">Y</text><text x="2" y="50" fill="#1515e0">Z</text><text x="50" y="50" fill="#ee1c1c">X</text>
      </svg>
      <div class="orientation">*Isometric</div>
    </section>`;
  }

  private model() {
    return html`<svg class="model" viewBox="243 191 1677 855" fill="none" stroke-linejoin="round" aria-label="Ratchet handle">
      <defs>
        <linearGradient id="tube" gradientUnits="userSpaceOnUse" x1="1000" y1="618" x2="1031" y2="671"><stop offset="0" stop-color="#9a9a9a"/><stop offset=".12" stop-color="#b4b4b4"/><stop offset=".35" stop-color="#d6d6d6"/><stop offset=".5" stop-color="#cdcdcd"/><stop offset=".82" stop-color="#858585"/><stop offset="1" stop-color="#3d3d3d"/></linearGradient>
        <linearGradient id="round" gradientUnits="userSpaceOnUse" x1="283" y1="742" x2="311" y2="791"><stop offset="0" stop-color="#cfcfcf"/><stop offset=".35" stop-color="#dcdcdc"/><stop offset="1" stop-color="#8a8a8a"/></linearGradient>
        <linearGradient id="flare" x1="0" y1="0" x2="1" y2="1"><stop offset="0" stop-color="#8c8c8c"/><stop offset=".5" stop-color="#dadada"/><stop offset="1" stop-color="#555"/></linearGradient>
        <linearGradient id="upper"><stop offset="0" stop-color="#5f5f5f"/><stop offset=".25" stop-color="#858585"/><stop offset=".55" stop-color="#a3a3a3"/><stop offset="1" stop-color="#858585"/></linearGradient>
        <linearGradient id="lower"><stop offset="0" stop-color="#3f3f3f"/><stop offset=".3" stop-color="#5c5c5c"/><stop offset=".6" stop-color="#737373"/><stop offset="1" stop-color="#5c5c5c"/></linearGradient>
        <linearGradient id="bore"><stop offset="0" stop-color="#5a5a5a"/><stop offset=".6" stop-color="#8b8b8b"/><stop offset="1" stop-color="#7d7d7d"/></linearGradient>
        <linearGradient id="bore2"><stop offset="0" stop-color="#5a5a5a"/><stop offset=".35" stop-color="#878787"/><stop offset=".75" stop-color="#8b8b8b"/><stop offset="1" stop-color="#6a6a6a"/></linearGradient>
        <linearGradient id="rim" x1="0" y1="0" x2="0" y2="1"><stop offset="0" stop-color="#9c9c9c"/><stop offset=".6" stop-color="#c4c4c4"/><stop offset="1" stop-color="#f0f0f0"/></linearGradient>
      </defs>

      <g transform="translate(1080 300) scale(.33333)" stroke="#111" stroke-width="3.500">
        <path d="M92 755V738L106 680Q112 662 130 659L1155 66Q1166 60 1180 65L1325 145Q1350 165 1352 195L1367 252 1350 320Q1345 335 1332 340L310 930Q293 940 280 932L222 900Z" fill="#4a4a4a"/>
        <path d="M130 659 1155 66 1182 70 145 665Z" fill="#a6a6a6"/>
        <path d="M145 665 1182 70 1312 150 283 742Z" fill="#cccccc"/>
        <path d="M283 742 1312 150Q1342 163 1350 197L312 795Q306 757 283 742Z" fill="url(#round)"/>
        <path d="M312 795 1350 197 1364 258 312 865Z" fill="#858585"/>
        <path d="M312 865 1364 258 1347 325 312 918Z" fill="#595959"/>
        <path d="M92 755V738L106 680Q112 662 130 659L145 665 283 742Q310 760 312 795V918Q304 937 284 934L222 900Z" fill="#bcbcbc"/>
        <path d="M104 755 119 697Q124 678 140 683L268 748Q291 765 291 800V908Q291 922 280 918L222 888Z" fill="#868686"/>
        <path d="M291 795 312 795M291 865 312 865M130 659 140 683M268 748 283 742M289 920 305 926"/>
        <path d="M106 750C115 715 140 699 165 697C205 705 228 738 245 752C272 790 284 830 278 880C272 905 250 914 230 900L200 760Z" fill="url(#flare)"/>
        <path d="M165 697Q160 715 152 733M245 750Q232 762 215 768M280 860Q255 852 238 856" />
      </g>
      <path d="M825 720 1123 547C1138 539 1150 545 1155 558 1161 573 1161 587 1158 598L846 777Z" fill="url(#tube)" stroke="#161616" stroke-width="1.200"/>

      <g transform="translate(620 680) scale(.33333)" stroke="#111" stroke-width="3.500">
        <path d="M65 285 43 415 50 450 68 545C76 592 120 625 200 648C290 667 400 660 468 600L625 475Q652 458 657 430L674 320 680 262 660 170 400 150Z" fill="#606060"/>
        <path d="M64 300 43 415 45 445C60 505 140 552 270 552C370 553 430 530 482 495L478 400 455 350Z" fill="url(#upper)"/>
        <path d="M45 445 50 460 68 545C76 592 120 625 200 648C290 667 400 660 468 600L482 495C430 530 370 553 270 552C140 552 60 505 45 445Z" fill="url(#lower)"/>
        <path d="M455 355 618 232Q633 275 638 370L482 495Q480 400 455 355Z" fill="#7c7c7c"/>
        <path d="M482 495 638 370 625 475 468 600Z" fill="#4c4c4c"/>
        <path d="M618 232 658 185 672 325 638 370Q633 275 618 232Z" fill="#666"/>
        <path d="M638 370 672 325 657 430Q652 458 625 475Z" fill="#454545"/>
        <path d="M64 290C68 250 90 220 145 196L385 98C440 76 530 76 580 95C640 118 662 155 654 190Q648 210 620 235L455 360C400 430 260 445 160 402C90 368 60 330 64 290Z" fill="url(#rim)" stroke-width="4"/>
        <path d="M78 285C86 248 105 225 155 205L400 105C450 84 530 86 575 104C630 125 645 158 638 185Q632 202 605 223L440 345C385 412 265 425 175 386C105 355 74 325 78 285Z" fill="none"/>
        <path d="M96 290C98 255 120 232 165 214L410 116C460 94 525 96 568 113C612 130 628 160 620 188Q612 205 590 225L425 345C375 400 270 412 190 378C125 350 92 325 96 290Z" fill="#828282"/>
        <path d="M104 300C105 270 130 240 180 226L360 150C400 124 500 108 560 130C600 145 618 170 617 192L425 345C375 394 270 404 195 374C135 350 102 325 104 300Z" fill="#cdcdcd"/>
        <path d="M105 310C104 262 145 228 210 213C260 205 310 208 343 214V373C290 370 230 374 193 382C140 360 106 340 105 310Z" fill="url(#bore)"/>
        <path d="M343 190C350 155 400 127 465 120C545 118 608 148 617 192L590 225 535 275 460 283C400 290 348 325 343 373Z" fill="url(#bore2)"/>
        <path d="M412 366C406 345 430 330 465 328L432 360Z" fill="#6b6b6b"/>
        <path d="M458 282Q472 300 464 328L458 330Z" fill="#555"/>
        <path d="M176 200V224M395 110V134"/>
        <g stroke="#1010e8" stroke-width="3.500"><path d="M287 428V350M276 401l22 22M298 401l-22 22M273 412h28M287 412l22 14"/><path d="M280 355 287 334 294 355ZM322 432 303 432 310 420Z" fill="#1010e8"/></g>
      </g>
    </svg>`;
  }

  private footer() {
    return html`<nav class="sheets">${["|◀", "◀", "▶", "▶|"].map(g => html`<button class="page" aria-label="Scroll tabs">${g}</button>`)}
        ${["Model", "3D Views", "Motion Study 1"].map(s => html`<button class=${classMap({ on: s === this.study })} @click=${() => (this.study = s)}>${s}</button>`)}</nav>
      <footer class="status"><span class="first">SOLIDWORKS</span><span class="cell gap"></span><span class="cell mode">Editing Part</span><span class="cell narrow"></span>
        <span class="cell units">Custom ${caret("up")}</span>${glyph("tag", "small")}</footer>`;
  }
}
